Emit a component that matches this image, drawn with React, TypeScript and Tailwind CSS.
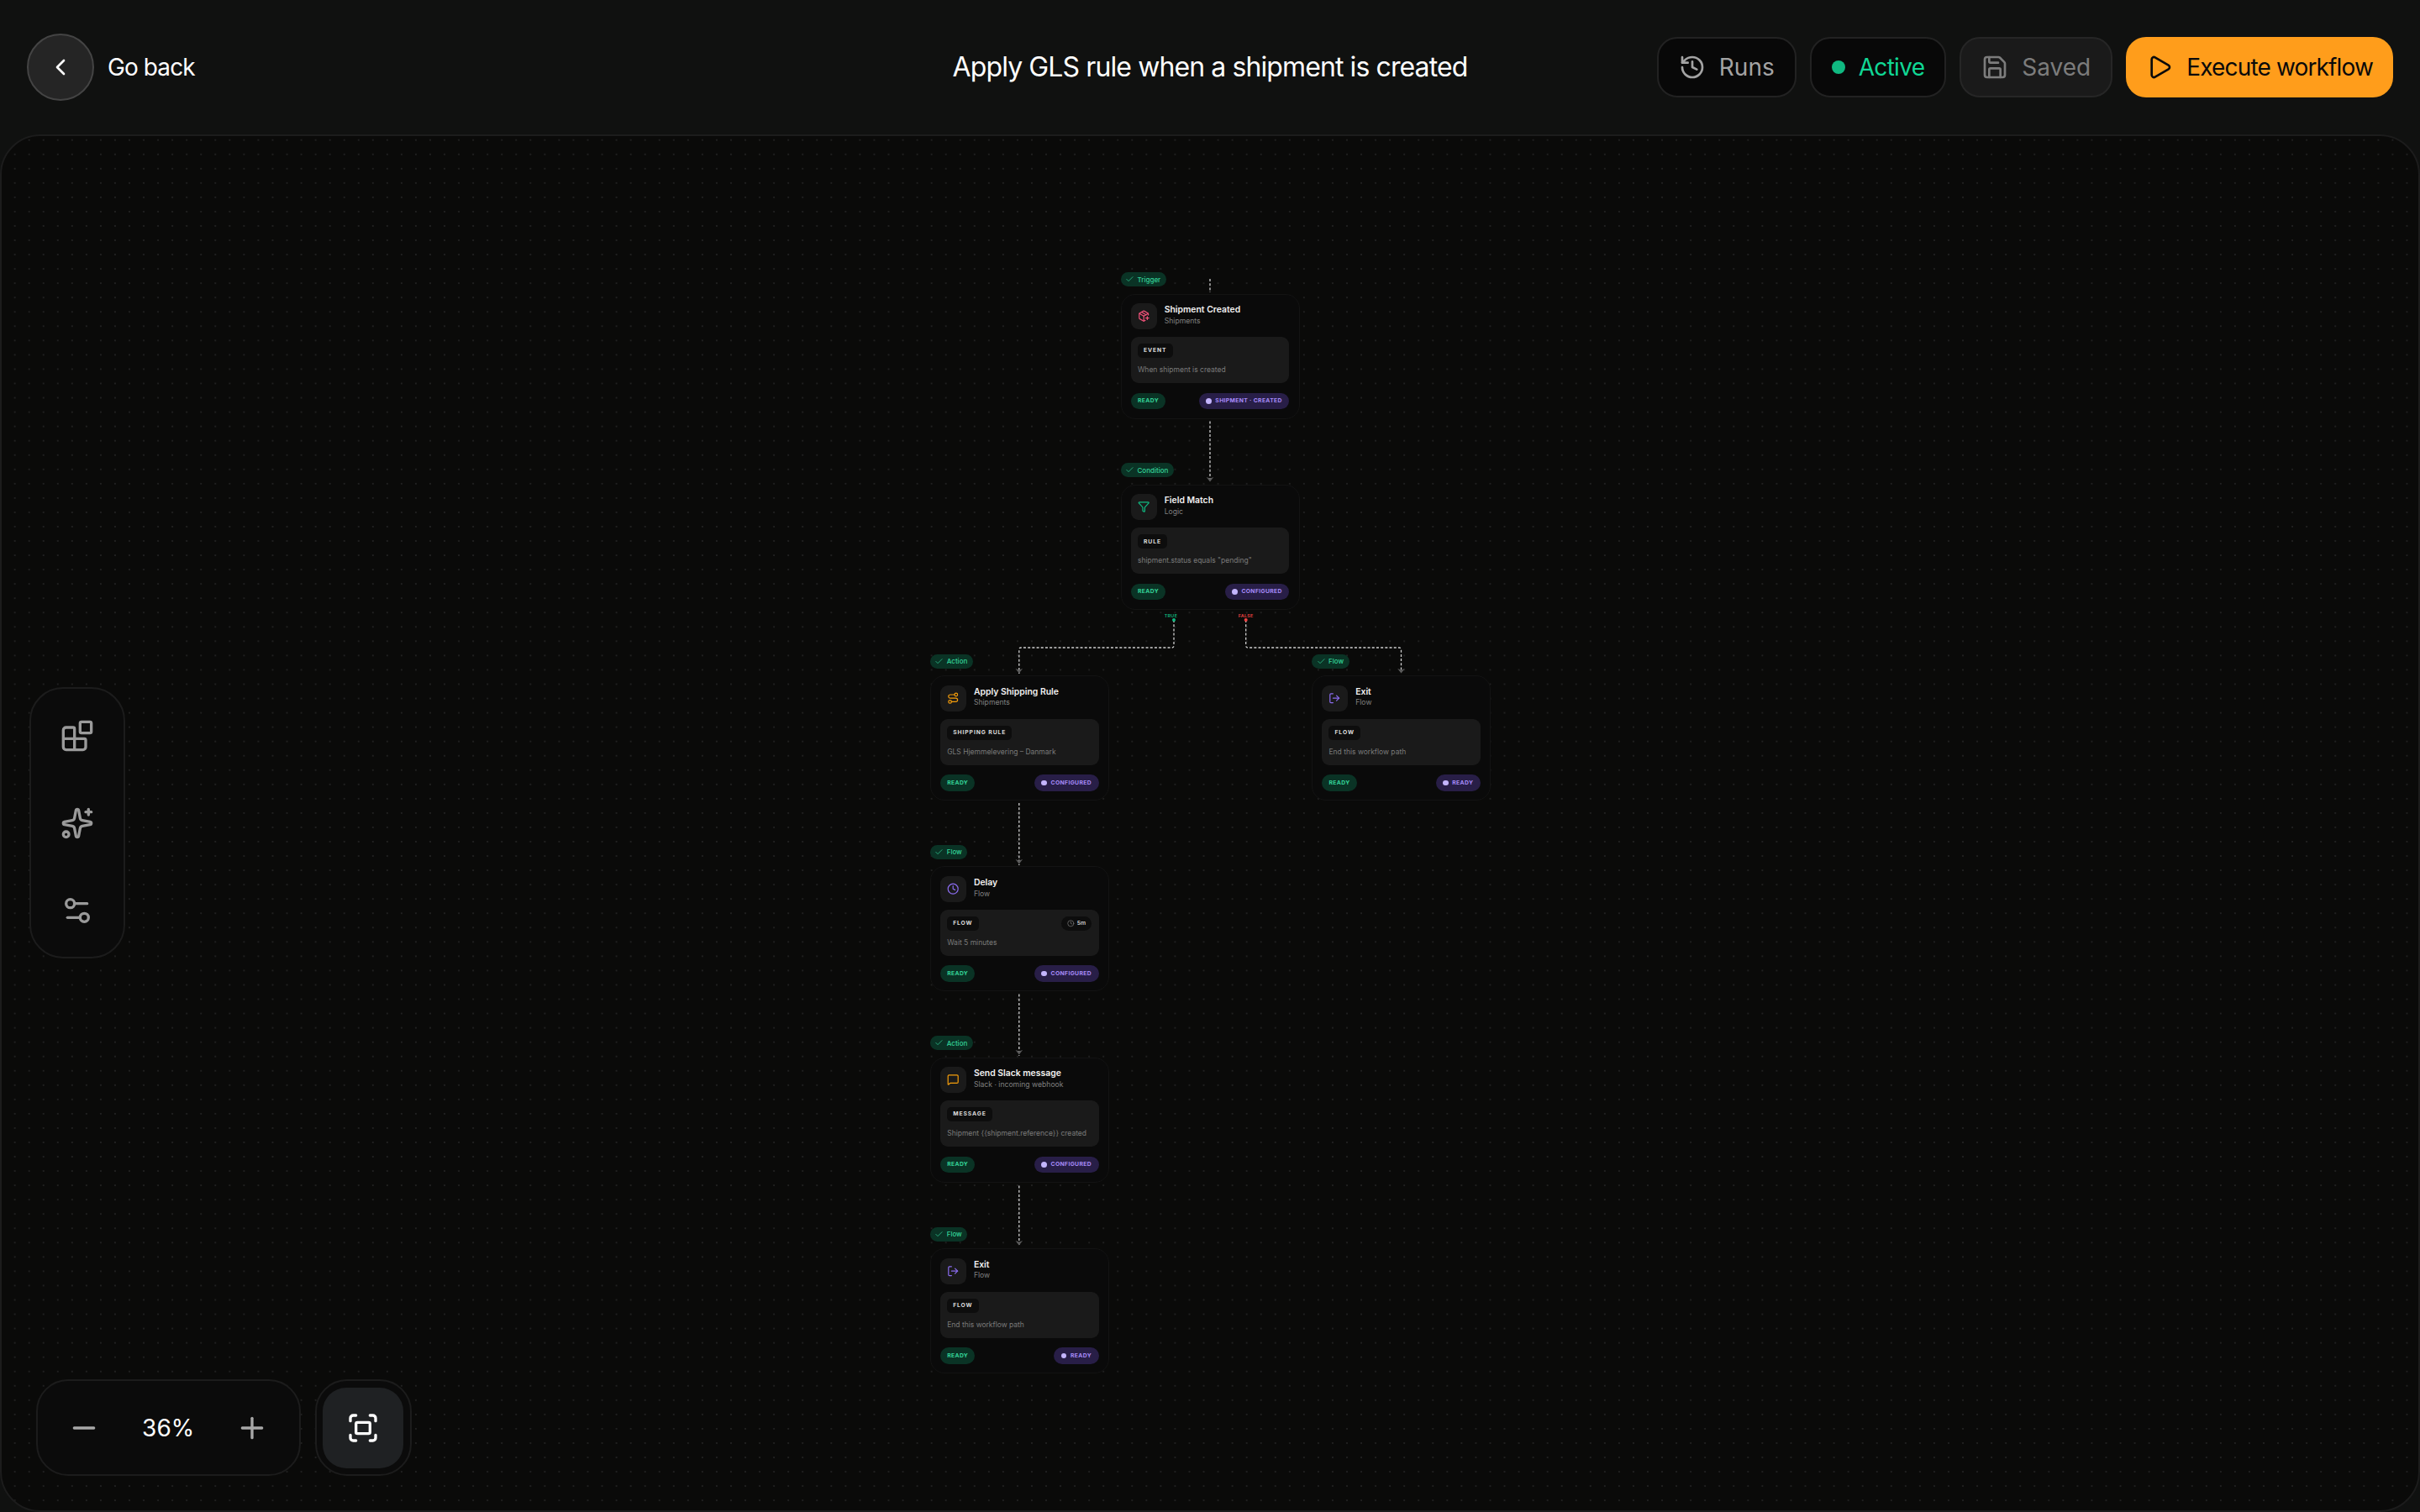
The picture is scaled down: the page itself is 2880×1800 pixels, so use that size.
import React from "react";
import {
  Blocks,
  Check,
  ChevronLeft,
  Clock,
  Fullscreen,
  Funnel,
  History,
  LogOut,
  MessageSquare,
  Minus,
  PackagePlus,
  Play,
  Plus,
  Route,
  Save,
  Settings2,
  Sparkles,
} from "lucide-react";

type NodeItem = {
  pos: string;
  tag: string;
  icon: React.ElementType;
  iconColor: string;
  title: string;
  sub: string;
  badge: string;
  desc: string;
  status: string;
  delay?: string;
};

const nodes: NodeItem[] = [
  {
    pos: "left-[1333.5px] top-[349.5px]",
    tag: "Trigger",
    icon: PackagePlus,
    iconColor: "text-[#f0527a]",
    title: "Shipment Created",
    sub: "Shipments",
    badge: "EVENT",
    desc: "When shipment is created",
    status: "SHIPMENT · CREATED",
  },
  {
    pos: "left-[1333.5px] top-[576.7px]",
    tag: "Condition",
    icon: Funnel,
    iconColor: "text-[#10b981]",
    title: "Field Match",
    sub: "Logic",
    badge: "RULE",
    desc: 'shipment.status equals "pending"',
    status: "CONFIGURED",
  },
  {
    pos: "left-[1106.7px] top-[804px]",
    tag: "Action",
    icon: Route,
    iconColor: "text-[#f59e0b]",
    title: "Apply Shipping Rule",
    sub: "Shipments",
    badge: "SHIPPING RULE",
    desc: "GLS Hjemmelevering – Danmark",
    status: "CONFIGURED",
  },
  {
    pos: "left-[1561px] top-[804px]",
    tag: "Flow",
    icon: LogOut,
    iconColor: "text-[#8b6cf0]",
    title: "Exit",
    sub: "Flow",
    badge: "FLOW",
    desc: "End this workflow path",
    status: "READY",
  },
  {
    pos: "left-[1106.7px] top-[1031.3px]",
    tag: "Flow",
    icon: Clock,
    iconColor: "text-[#8b6cf0]",
    title: "Delay",
    sub: "Flow",
    badge: "FLOW",
    desc: "Wait 5 minutes",
    status: "CONFIGURED",
    delay: "5m",
  },
  {
    pos: "left-[1106.7px] top-[1258.5px]",
    tag: "Action",
    icon: MessageSquare,
    iconColor: "text-[#f59e0b]",
    title: "Send Slack message",
    sub: "Slack · incoming webhook",
    badge: "MESSAGE",
    desc: "Shipment {{shipment.reference}} created",
    status: "CONFIGURED",
  },
  {
    pos: "left-[1106.7px] top-[1486px]",
    tag: "Flow",
    icon: LogOut,
    iconColor: "text-[#8b6cf0]",
    title: "Exit",
    sub: "Flow",
    badge: "FLOW",
    desc: "End this workflow path",
    status: "READY",
  },
];

const wires = [
  "M1440 332V348",
  "M1440 501.5V572",
  "M1397 738V768.5Q1397 771 1394.5 771H1215.2Q1212.8 771 1212.8 773.5V802",
  "M1482.7 738V768.5Q1482.7 771 1485.2 771H1665Q1667.5 771 1667.5 773.5V800",
  "M1212.8 956V1030",
  "M1212.8 1183.5V1257",
  "M1212.8 1411.5V1484",
];

const arrows = [
  [1440, 568],
  [1212.8, 796],
  [1667.5, 796],
  [1212.8, 1023],
  [1212.8, 1250],
  [1212.8, 1477],
];

const FlowNode = ({ node }: { node: NodeItem }) => {
  const Icon = node.icon;
  return (
    <div className={`absolute ${node.pos} w-[213px] h-[149px] rounded-[17px] border border-[#131313] bg-[#0a0a0a] px-[11.2px] pt-[10.5px]`}>
      <div className="absolute left-[-1px] top-[-26.5px] flex h-[17.3px] items-center gap-[3.5px] rounded-full bg-[#0a3325] pl-[5.7px] pr-[6.5px] text-[8px] font-medium text-[#34d399]">
        <Check size={10.8} strokeWidth={1.6} />
        <span>{node.tag}</span>
      </div>

      <div className="flex gap-[9px]">
        <div className="flex h-[31px] w-[31px] items-center justify-center rounded-[9px] bg-[#1a1a1a]">
          <Icon size={14.4} className={node.iconColor} />
        </div>
        <div className="flex flex-col pt-[2.3px]">
          <div className="text-[10.4px] leading-[12px] font-semibold text-[#f0f0f0]">{node.title}</div>
          <div className="mt-[0.7px] text-[8.64px] leading-[12px] text-[#808080]">{node.sub}</div>
        </div>
      </div>

      <div className="mt-[9px] h-[55px] rounded-[9px] bg-[#1a1a1a] px-[8.3px] pt-[8px]">
        <div className="flex items-center justify-between">
          <span className="flex h-[17px] items-center rounded-[5px] bg-[#0d0d0d] px-[7px] text-[6.8px] font-bold tracking-[0.9px] text-[#dddddd]">
            {node.badge}
          </span>
          {node.delay && (
            <span className="flex h-[16.5px] items-center gap-[3px] rounded-full bg-[#0d0d0d] pl-[7px] pr-[7px] text-[6.8px] font-semibold text-[#cccccc]">
              <Clock size={8.6} className="text-[#777777]" />
              {node.delay}
            </span>
          )}
        </div>
        <div className="mt-[8px] text-[8.5px] leading-[12px] text-[#7a7a7a]">{node.desc}</div>
      </div>

      <div className="mt-[11.6px] flex items-center justify-between">
        <span className="flex h-[19.5px] items-center rounded-full bg-[#0a3325] px-[8.3px] text-[6.8px] font-bold tracking-[0.35px] text-[#34d399]">
          READY
        </span>
        <span className="flex h-[19.5px] items-center gap-[4.7px] rounded-full bg-[#281e47] px-[8.5px] text-[6.8px] font-bold tracking-[0.35px] text-[#a78bfa]">
          <span className="h-[6.5px] w-[6.5px] rounded-full bg-[#c4b5fd]" />
          {node.status}
        </span>
      </div>
    </div>
  );
};

export default function App() {
  return (
    <div className="flex h-[1800px] w-[2880px] flex-col overflow-hidden bg-[#101110] font-['Inter',sans-serif] text-white">
      <header className="grid h-[160px] shrink-0 grid-cols-[1fr_auto_1fr] items-center px-[32px]">
        <div className="flex items-center gap-4">
          <button className="flex h-[80px] w-[80px] items-center justify-center rounded-full border-2 border-[#444444] bg-[#252525]">
            <ChevronLeft size={32} />
          </button>
          <span className="text-[28px] tracking-[-0.9px]">Go back</span>
        </div>

        <h1 className="text-[32px] font-normal tracking-[-0.9px]">Apply GLS rule when a shipment is created</h1>

        <div className="flex items-center justify-end gap-4 text-[28px] tracking-[-0.7px]">
          <button className="flex h-[72px] items-center gap-4 rounded-[24px] border-2 border-[#222222] bg-[#080808] px-6 tracking-normal text-[#a3a3a3]">
            <History size={32} />
            Runs
          </button>
          <button className="flex h-[72px] items-center gap-4 rounded-[24px] border-2 border-[#222222] bg-[#080808] px-6 text-[#10d795]">
            <span className="h-4 w-4 rounded-full bg-[#10b981]" />
            Active
          </button>
          <button className="flex h-[72px] items-center gap-4 rounded-[24px] border-2 border-[#262626] bg-[#1a1a1a] px-6 tracking-normal text-[#7c7c7c]">
            <Save size={32} />
            Saved
          </button>
          <button className="flex h-[72px] items-center gap-4 rounded-[24px] bg-[#ff9d1b] px-6 tracking-[-0.85px] text-[#0a0a0a]">
            <Play size={32} />
            Execute workflow
          </button>
        </div>
      </header>

      <main className="relative flex-1 rounded-[48px] border-2 border-[#1c1c1c] bg-[#0a0a09] bg-[radial-gradient(circle,#202020_1.1px,transparent_1.5px)] bg-[length:17.06px_17.06px] bg-[position:7.14px_-3.83px]">
        <svg className="absolute left-[-2px] top-[-2px]" width="2880" height="1640" viewBox="0 160 2880 1640" fill="none">
          {wires.map((d) => (
            <path key={d} d={d} stroke="#cfcfcf" strokeWidth="1.3" strokeDasharray="3 2.2" />
          ))}
          {arrows.map(([x, y]) => (
            <polygon
              key={`${x}-${y}`}
              points={`${x - 4.3},${y} ${x},${y + 1.5} ${x + 4.3},${y} ${x},${y + 5.5}`}
              fill="#5a5a5a"
            />
          ))}
          <circle cx="1397" cy="738" r="2" fill="#10b981" />
          <circle cx="1482.7" cy="738" r="2" fill="#ef4444" />
        </svg>

        {/* page coordinates for everything on the canvas */}
        <div className="absolute left-[-2px] top-[-162px]">
          {nodes.map((node) => (
            <FlowNode key={node.title + node.pos} node={node} />
          ))}
          <span className="absolute left-[1385.7px] top-[730px] text-[5.4px] leading-[7px] font-semibold tracking-[0.3px] text-[#10b981]">TRUE</span>
          <span className="absolute left-[1473.7px] top-[730px] text-[5.4px] leading-[7px] font-semibold tracking-[0.3px] text-[#ef4444]">FALSE</span>
        </div>

        <div className="absolute left-[33px] top-[656.3px] flex flex-col items-center gap-[64px] rounded-[40px] border-2 border-[#1c1c1c] bg-[#0b0b0b] px-[35px] py-[35.5px] text-[#9a9a9a]">
          <Blocks size={40} strokeWidth={2} />
          <Sparkles size={40} strokeWidth={2} />
          <Settings2 size={40} strokeWidth={2} />
        </div>

        <div className="absolute left-[40.7px] top-[1480.3px] flex gap-[17px]">
          <div className="flex h-[115px] w-[315px] items-center justify-between rounded-[38px] border-2 border-[#1c1c1c] bg-[#0b0b0b] px-[35.5px] text-[#a8a8a8]">
            <Minus size={40} />
            <span className="text-[28px] tracking-normal text-white">36%</span>
            <Plus size={40} />
          </div>
          <div className="flex h-[115px] w-[115px] items-center justify-center rounded-[38px] border-2 border-[#1c1c1c] bg-[#0b0b0b]">
            <button className="flex h-[96px] w-[96px] items-center justify-center rounded-[28px] bg-[#1f2123]">
              <Fullscreen size={40} />
            </button>
          </div>
        </div>
      </main>
    </div>
  );
}
